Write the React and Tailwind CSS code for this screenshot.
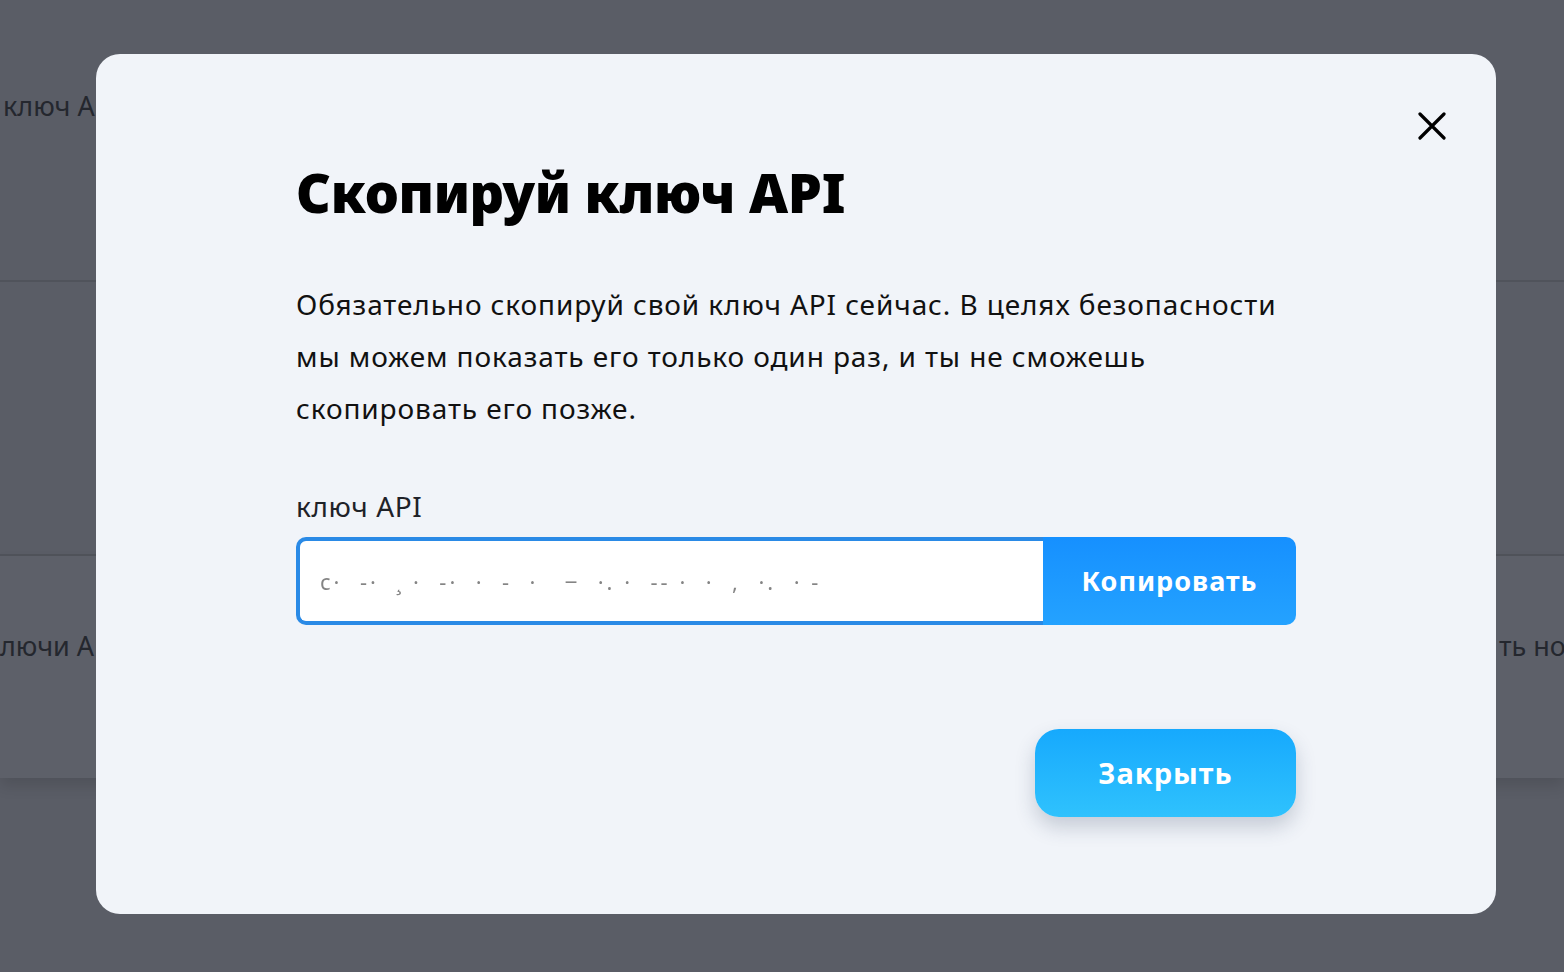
const font = { fontFamily: "'Noto Sans', 'Open Sans', sans-serif" };

// dimmed page behind the dialog
function BackdropPage() {
  return (
    <div className="absolute inset-0 overflow-hidden bg-[#5a5d66] text-[27px] text-[#24272e]">
      <div className="flex h-[282px] items-start border-b-2 border-[#50535b] pt-[86px] pl-[3px]">
        <span className="whitespace-nowrap">ключ API</span>
      </div>
      <div className="h-[274px] border-b-2 border-[#50535b]" />
      <div className="flex h-[222px] items-start bg-[#5d6069] pt-[70px] shadow-[0_8px_14px_rgba(0,0,0,0.12)]">
        <span className="w-[1499px] shrink-0 whitespace-nowrap">лючи API</span>
        <span className="whitespace-nowrap">ть новый ключ</span>
      </div>
    </div>
  );
}

function CloseIcon() {
  return (
    <svg width="28" height="28" viewBox="0 0 28 28" fill="none" stroke="currentColor" strokeWidth="3.2" strokeLinecap="round">
      <path d="M2 2 L26 26 M26 2 L2 26" />
    </svg>
  );
}

function KeyField() {
  return (
    <div className="flex h-[88px] w-full">
      <div className="flex flex-1 items-center overflow-hidden rounded-l-[10px] border-4 border-r-0 border-[#2a8ae6] bg-white px-5">
        <span className="whitespace-pre text-[22px] tracking-[3px] text-[#333] opacity-60 blur-[0.7px]">
          {"c·  -·  ¸ ·  -·  ·  ‐  ·   ‒  ·. ·  -‐ ·  ·  ,  ·.  · -"}
        </span>
      </div>
      <button className="w-[253px] rounded-r-[10px] bg-gradient-to-b from-[#1690ff] to-[#24a2ff] text-[27px] font-bold tracking-[1px] text-white">
        Копировать
      </button>
    </div>
  );
}

export default function App() {
  return (
    <div className="relative h-[972px] w-full overflow-hidden" style={font}>
      <BackdropPage />
      <div className="absolute inset-0 pt-[54px] pl-[96px]">
        <div className="relative h-[860px] w-[1400px] rounded-[24px] bg-[#f1f4f9] px-[200px] pt-[103px]">
          <button className="absolute right-[50px] top-[58px] text-black">
            <CloseIcon />
          </button>
          <h1 className="text-[54px] font-black leading-[70px] tracking-[-0.3px] text-black">Скопируй ключ API</h1>
          <p className="mt-[51px] text-[28px] leading-[52px] tracking-[0.9px] text-[#111]">
            Обязательно скопируй свой ключ API сейчас. В целях безопасности мы можем показать его только один раз, и ты не сможешь скопировать его позже.
          </p>
          <div className="mt-[46px] text-[28px] leading-[52px] tracking-[0.6px] text-[#1f2228]">ключ API</div>
          <div className="mt-[5px]">
            <KeyField />
          </div>
          <div className="mt-[104px] flex justify-end">
            <button className="h-[88px] w-[261px] rounded-[24px] bg-gradient-to-b from-[#16a9fd] to-[#2fc2fd] text-[29px] font-bold tracking-[1px] text-white shadow-[0_10px_20px_rgba(40,60,90,0.22)]">
              Закрыть
            </button>
          </div>
        </div>
      </div>
    </div>
  );
}
